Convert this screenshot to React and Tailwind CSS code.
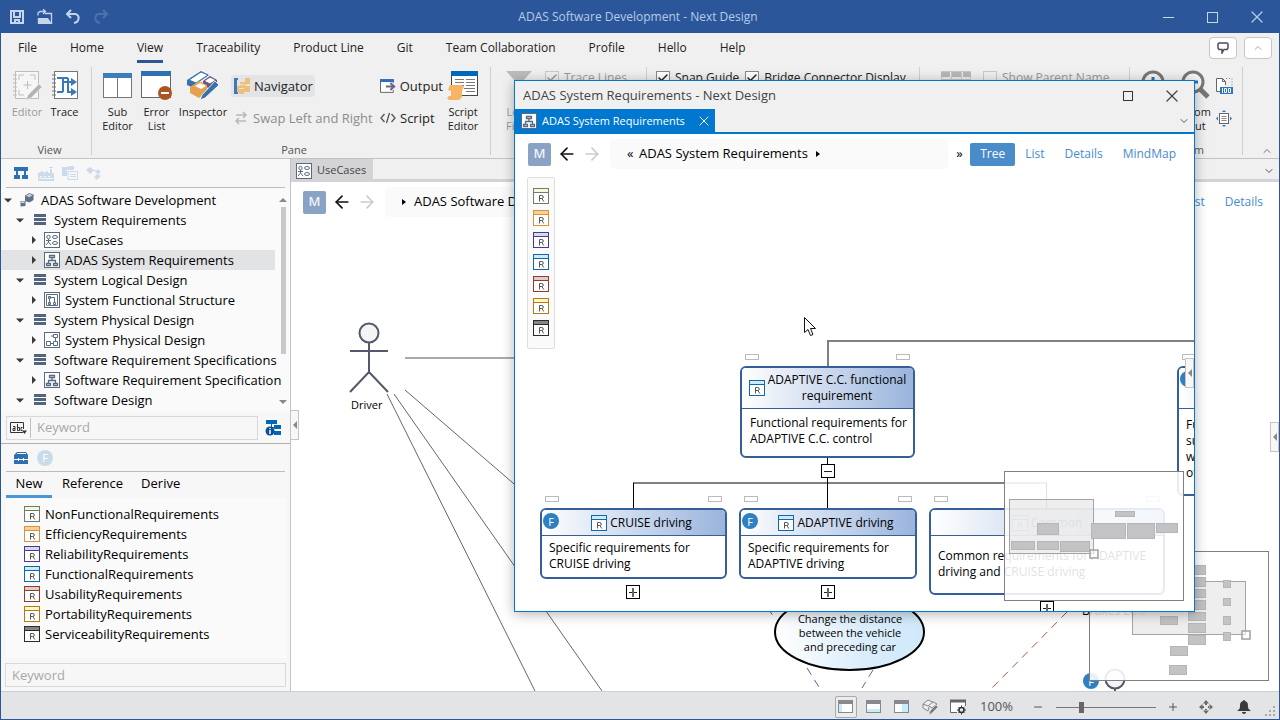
import React from "react";
import { ArrowLeft, ArrowRight, Check, ChevronDown, ChevronUp, Minus, Plus, X } from "lucide-react";

const MENU = ["File", "Home", "View", "Traceability", "Product Line", "Git", "Team Collaboration", "Profile", "Hello", "Help"];

const REQS = [
  { name: "NonFunctionalRequirements", stroke: "#6b7f68", fill: "#f4fadb" },
  { name: "EfficiencyRequirements", stroke: "#d8923a", fill: "#f8cf9a" },
  { name: "ReliabilityRequirements", stroke: "#4a3a8e", fill: "#d5d8f4" },
  { name: "FunctionalRequirements", stroke: "#0e69a6", fill: "#cdeafb" },
  { name: "UsabilityRequirements", stroke: "#963a2c", fill: "#d8d0d0" },
  { name: "PortabilityRequirements", stroke: "#b87a10", fill: "#fff5c4" },
  { name: "ServiceabilityRequirements", stroke: "#2e2a2c", fill: "#8b8484" },
];

const TREE = [
  { label: "ADAS Software Development", depth: 0, icon: "project" },
  { label: "System Requirements", depth: 1, icon: "folder" },
  { label: "UseCases", depth: 2, icon: "usecase" },
  { label: "ADAS System Requirements", depth: 2, icon: "tree", selected: true },
  { label: "System Logical Design", depth: 1, icon: "folder" },
  { label: "System Functional Structure", depth: 2, icon: "structure" },
  { label: "System Physical Design", depth: 1, icon: "folder" },
  { label: "System Physical Design", depth: 2, icon: "physical" },
  { label: "Software Requirement Specifications", depth: 1, icon: "folder" },
  { label: "Software Requirement Specification", depth: 2, icon: "tree" },
  { label: "Software Design", depth: 1, icon: "folder" },
];

/* ---------- icons ---------- */

function ReqIcon({ stroke = "#0e69a6", fill = "#cdeafb" }) {
  return (
    <svg width="16" height="16" viewBox="0 0 16 16" className="shrink-0" fill="none">
      <rect x="0.5" y="0.5" width="15" height="15" fill="#fff" stroke={stroke} />
      <path d="M1 1h14v3H1z" fill={fill} />
      <path d="M1 4.5h14" stroke={stroke} />
      <path d="M6.500 13.500V7.500h2.300a1.500 1.500 0 0 1 0 3H6.500M9 10.500l1.700 3" stroke="#555" />
    </svg>
  );
}

function ModelIcon({ type }) {
  if (type === "project") {
    return (
      <svg width="14" height="14" viewBox="0 0 14 14" className="shrink-0">
        <path d="M5 3l4-2.500L13.500 2v5L9.500 9.500 5 8z" fill="#5f7088" />
        <path d="M5 3l4.500 1.500L13.500 2 9 .5z" fill="#c8d0dc" stroke="#5f7088" strokeWidth=".7" />
        <path d="M.5 8h5v5l-5 .5z" fill="#5f7088" />
        <path d="M1 8.500h3.500v1.500H1z" fill="#d4dae4" />
      </svg>
    );
  }
  if (type === "folder") {
    return (
      <svg width="13" height="12" viewBox="0 0 13 12" className="shrink-0" fill="#52657c">
        <path d="M1 0h12v3H1zM1 4h12v3H1zM1 8h12v3H1z" />
      </svg>
    );
  }
  return (
    <svg width="16" height="16" viewBox="0 0 16 16" className="shrink-0" fill="none" stroke="#5a6b80">
      <rect x="0.500" y="0.500" width="15" height="15" fill="#fff" />
      {type === "tree" && (
        <path d="M5.500 3.500h5v2h-5zM8 5.500v3M4.500 11V8.500h7V11M2.500 11.500h4v2h-4zM9.500 11.500h4v2h-4z" strokeWidth="1.300" />
      )}
      {type === "usecase" && (
        <g>
          <circle cx="4.500" cy="5" r="1.700" />
          <path d="M4.500 7v3M2 8.500h5M2 13l2.500-3L7 13" />
          <ellipse cx="11" cy="5" rx="2.500" ry="1.500" />
          <ellipse cx="11" cy="11" rx="2.500" ry="1.500" />
        </g>
      )}
      {type === "structure" && (
        <path d="M2.500 2.500h11v11h-11zM5.500 5.500v6M4.500 4.500h2v2h-2zM4.500 10.500h2v2h-2zM6.500 5.500h4v5M9.500 10.500h2v2h-2z" />
      )}
      {type === "physical" && (
        <path d="M9.500 2.500h4v3h-4zM7 4h2.500M11.500 5.500V10M2.500 9.500h4v4h-4zM9.500 9.500h4v4h-4zM6.500 11.500h3" />
      )}
    </svg>
  );
}

function Caret({ open }) {
  return (
    <svg width="10" height="10" viewBox="0 0 10 10" className="shrink-0" fill="#3a3a3a">
      {open ? <path d="M1 3.500h8L5 7.500z" /> : <path d="M3 1l4 4-4 4z" />}
    </svg>
  );
}

function CrumbMark() {
  return (
    <svg width="4" height="6" viewBox="0 0 4 6" className="shrink-0">
      <path d="M0 0l4 3-4 3z" />
    </svg>
  );
}

function EditorIcon() {
  return (
    <svg width="30" height="30" viewBox="0 0 30 30" fill="none" stroke="#bdbdbd">
      <rect x="3.500" y="1.500" width="23" height="27" fill="#f6f6f6" />
      <path d="M1 5h4M1 9h4M1 13h4M1 17h4M1 21h4M1 25h4" />
      <path d="M7 10V5h5M18 5h5v5M7 20v5h5M15.500 11v8M11.500 15h8" />
      <path d="M27 14l3 3-11 11-5 2 2-5z" fill="#b4b4b4" stroke="#f0f0f0" strokeWidth=".6" />
    </svg>
  );
}

function TraceIcon() {
  return (
    <svg width="28" height="30" viewBox="0 0 28 30" fill="none">
      <rect x="3.500" y="1.500" width="23" height="27" fill="#fff" stroke="#777" />
      <path d="M1 5h4M1 9h4M1 13h4M1 17h4M1 21h4M1 25h4" stroke="#777" />
      <path d="M6 8h6v14M6 22h6M12 12h9M17 8v14h4M12 8h5" stroke="#3b7ab8" strokeWidth="2" />
      <path d="M20 8l6 4-6 4zM20 18l6 4-6 4z" fill="#3b7ab8" />
    </svg>
  );
}

function SubEditorIcon() {
  return (
    <svg width="30" height="30" viewBox="0 0 30 30" fill="none">
      <rect x="0.500" y="3.500" width="28" height="24" fill="#fff" stroke="#777" />
      <path d="M0 3h29v5H0z" fill="#3f7cba" />
      <path d="M14.500 8v20" stroke="#777" />
    </svg>
  );
}

function ErrorListIcon() {
  return (
    <svg width="32" height="30" viewBox="0 0 32 30" fill="none">
      <rect x="0.500" y="1.500" width="29" height="26" fill="#fff" stroke="#666" />
      <path d="M0 1h30v5H0z" fill="#2f70b2" />
      <circle cx="24" cy="23" r="7" fill="#ad5522" />
      <path d="M20 23h8" stroke="#fff" strokeWidth="2" />
    </svg>
  );
}

function InspectorIcon() {
  return (
    <svg width="34" height="32" viewBox="0 0 34 32" fill="none">
      <path d="M1 10l14-9 8 4-13 9v5L1 15z" fill="#3573b0" />
      <path d="M3 10l12-8 7 3-12 8z" fill="#fff" stroke="#3573b0" />
      <path d="M17 11l7-5 7 4v4l-7 5-7-4z" fill="#6a5482" />
      <path d="M18 11l6-4 6 3-6 4z" fill="#fff" stroke="#6a5482" />
      <path d="M4 17l9-6 8 4v7l-8 6-9-5z" fill="#e4a24e" />
      <path d="M9 16l5-3 6 3-5 3z" fill="#fff" />
      <path d="M29 11l4 4-14 13-5 2 2-5z" fill="#3573b0" stroke="#fff" strokeWidth=".8" />
    </svg>
  );
}

function NavigatorIcon() {
  return (
    <svg width="16" height="16" viewBox="0 0 16 16">
      <path d="M0 0h4v2H3v12h1v2H0z" fill="#3b7ab8" />
      <path d="M11 0h5v6h-5zM6 4h6v6H6zM10 8h6v6h-6zM3 8h3v6H3zM5 11h5v5H5z" fill="#ecc07c" />
      <path d="M11 2.500h-1M6 6.500h4M11 7.500h5M5 10.500h5" stroke="#f6e3c4" />
    </svg>
  );
}

function SwapIcon() {
  return (
    <svg width="14" height="14" viewBox="0 0 14 14" fill="none" stroke="#b8b8b8" strokeWidth="1.500">
      <path d="M2 4h10M9 1l3 3-3 3M12 10H2M5 7l-3 3 3 3" />
    </svg>
  );
}

function OutputIcon() {
  return (
    <svg width="16" height="14" viewBox="0 0 16 14" fill="none">
      <path d="M13.500 4V.5H.5v13h13V11" fill="#fff" stroke="#666" />
      <path d="M0 0h14v3H0z" fill="#2f6fb4" />
      <path d="M6 7.500h7M10.500 4l4 3.500-4 3.500" stroke="#6a6488" strokeWidth="2" />
    </svg>
  );
}

function CodeIcon() {
  return (
    <svg width="16" height="12" viewBox="0 0 16 12" fill="none" stroke="#555" strokeWidth="1.300">
      <path d="M4.500 2L1 6l3.500 4M11.500 2L15 6l-3.500 4M9.500 1l-3 10" />
    </svg>
  );
}

function ScriptEditorIcon() {
  return (
    <svg width="32" height="30" viewBox="0 0 32 30" fill="none">
      <rect x="4.500" y="1.500" width="26" height="24" fill="#fff" stroke="#444" />
      <path d="M4 1h27v5H4z" fill="#0068b8" />
      <path d="M8 9.500h9M19 9.500h9M8 12.500h9M19 12.500h9M12 15.500h5M19 15.500h9M17 18.500h11M19 21.500h9" stroke="#777" />
      <path d="M3 15h12l2 2-2 3v7l-3 3H2l-2-2 2-2h2v-5l-3-1z" fill="#f5b562" />
    </svg>
  );
}

function ZoomGlass({ sign }) {
  return (
    <svg width="30" height="30" viewBox="0 0 30 30" fill="none">
      <circle cx="12" cy="12" r="10" stroke="#777" strokeWidth="3" fill="#f4f4f4" />
      <path d="M19 19l8 8" stroke="#777" strokeWidth="5" />
      <path d={sign === "+" ? "M7 12h10M12 7v10" : "M7 12h10"} stroke="#2f70b2" strokeWidth="3" />
    </svg>
  );
}

function Badge() {
  return (
    <span className="flex size-4 items-center justify-center rounded-full bg-[#2f80c2] text-[11px] leading-none text-white">
      F
    </span>
  );
}

/* ---------- ribbon ---------- */

function BigButton({ icon, lines, disabled, width }) {
  return (
    <button
      disabled={disabled}
      className={`flex shrink-0 flex-col items-center text-[11px] leading-[14px] ${width} ${disabled ? "text-[#9a9a9a]" : "text-[#222]"}`}
    >
      <span className="flex h-[35px] items-start">{icon}</span>
      {lines.map((l) => (
        <span key={l} className="whitespace-nowrap">{l}</span>
      ))}
    </button>
  );
}

function Group({ label, className, children }) {
  return (
    <section className={`flex h-[88px] shrink-0 flex-col border-r border-[#d0d0d0] ${className}`}>
      <div className="flex flex-1 items-start pt-[3px]">{children}</div>
      <div className="h-3 text-center text-[11px] leading-[14px] text-[#555]">{label}</div>
    </section>
  );
}

function RibbonCheck({ label, checked, disabled }) {
  return (
    <label className={`flex items-center gap-[5px] whitespace-nowrap text-xs leading-4 ${disabled ? "text-[#9a9a9a]" : "text-[#222]"}`}>
      <span className="relative flex size-[14px]">
        <input
          type="checkbox"
          defaultChecked={checked}
          disabled={disabled}
          className={`size-[14px] appearance-none border ${disabled ? "border-[#c8ccc8] bg-[#f0f0f0]" : "border-[#888] bg-white"}`}
        />
        {checked && <Check className="pointer-events-none absolute left-px top-px size-3" strokeWidth={3} />}
      </span>
      {label}
    </label>
  );
}

function Ribbon() {
  return (
    <div className="flex h-[93px] shrink-0 items-start overflow-hidden border-b border-[#c3c3c3] pt-px">
      <Group label="View" className="w-[91px] pl-[7px]">
        <BigButton icon={<EditorIcon />} lines={["Editor"]} disabled width="w-[38px]" />
        <BigButton icon={<TraceIcon />} lines={["Trace"]} width="w-[37px]" />
      </Group>
      <Group label="Pane" className="w-[399px] pl-[6px]">
        <BigButton icon={<SubEditorIcon />} lines={["Sub", "Editor"]} width="w-[39px]" />
        <BigButton icon={<ErrorListIcon />} lines={["Error", "List"]} width="w-[39px]" />
        <BigButton icon={<InspectorIcon />} lines={["Inspector"]} width="w-[54px]" />
        <div className="grid grid-cols-[150px_63px] gap-y-[10px] pt-[5px] text-[13px] leading-[22px] text-[#222]">
          <div>
            <button className="ml-px flex h-[22px] w-[84px] items-center gap-1 rounded-sm bg-[#e2e4e6] pl-[3px]">
              <NavigatorIcon />Navigator
            </button>
          </div>
          <button className="flex items-center gap-1"><OutputIcon />Output</button>
          <button disabled className="flex items-center gap-[5px] whitespace-nowrap pl-1 text-[#8d8d8d]">
            <SwapIcon />Swap Left and Right
          </button>
          <button className="flex items-center gap-1"><CodeIcon />Script</button>
        </div>
        <BigButton icon={<ScriptEditorIcon />} lines={["Script", "Editor"]} width="w-[40px]" />
      </Group>
      <Group label="" className="w-[156px] pl-2">
        <BigButton
          icon={<svg width="26" height="28" viewBox="0 0 26 28"><path d="M0 1h26L16 12v12l-6-4v-8z" fill="#bcbcbc" /></svg>}
          lines={["Load", "Filter"]}
          disabled
          width="w-[40px]"
        />
        <div className="pl-[6px]">
          <RibbonCheck label="Trace Lines" checked disabled />
        </div>
      </Group>
      <Group label="" className="w-[273px] pl-[9px]">
        <div className="flex gap-[6px]">
          <RibbonCheck label="Snap Guide" checked />
          <RibbonCheck label="Bridge Connector Display" checked />
        </div>
      </Group>
      <Group label="" className="w-[210px] pl-[21px]">
        <svg width="30" height="28" viewBox="0 0 30 28" className="mr-3 shrink-0" fill="none" stroke="#c8c8c8">
          <path d="M.5 1.500h29v24H.5zM.5 9.500h29M10.500 1v24M20.500 1v24" fill="#f0f0f0" />
          <path d="M0 2h9v5H0zM11 2h9v5h-9zM22 2h8v5h-8z" fill="#b8b8b8" stroke="none" />
        </svg>
        <RibbonCheck label="Show Parent Name" disabled />
      </Group>
      <Group label="Zoom" className="w-[113px] pl-[6px]">
        <BigButton icon={<ZoomGlass sign="+" />} lines={["Zoom", "In"]} width="w-[40px]" />
        <BigButton icon={<ZoomGlass sign="-" />} lines={["Zoom", "Out"]} width="w-[40px]" />
        <div className="flex flex-col gap-4 pt-[7px]">
          <button aria-label="Actual size">
            <svg width="17" height="17" viewBox="0 0 17 17" fill="none">
              <path d="M.5 14.500V1.500h6l3 3V8M.5 14.500H4M6.500 1.500v3h3" stroke="#666" fill="#fff" />
              <path d="M10 1.500h6V9" stroke="#888" strokeDasharray="1 2" />
              <path d="M4 10h13v7H4z" fill="#2f75b8" />
              <path d="M6.500 11v5M8.500 11.500h2v4h-2zM12.500 11.500h2v4h-2z" stroke="#fff" />
            </svg>
          </button>
          <button aria-label="Fit to window">
            <svg width="17" height="17" viewBox="0 0 17 17" fill="none">
              <rect x="3.500" y="3.500" width="9" height="10" fill="#fff" stroke="#666" />
              <path d="M5.500 6.500h5M5.500 8.500h5M5.500 10.500h5" stroke="#888" />
              <path d="M6 2L8 0l2 2zM6 15l2 2 2-2zM2 6.500L0 8.500l2 2zM14 6.500l2 2-2 2z" fill="#2f75b8" />
            </svg>
          </button>
        </div>
      </Group>
      <button aria-label="Collapse ribbon" className="ml-auto mr-[6px] self-end pb-px">
        <ChevronUp className="size-3 text-[#777]" />
      </button>
    </div>
  );
}

/* ---------- side bar ---------- */

function TreeRow({ item }) {
  const pad = ["pl-[2px]", "pl-[14px]", "pl-[28px]"][item.depth];
  const gap = ["gap-[7px]", "gap-[8px]", "gap-[5px]"][item.depth];
  return (
    <li className={`mr-[15px] flex h-5 items-center whitespace-nowrap text-[13px] leading-5 ${gap} ${pad} ${item.selected ? "bg-[#e2e3e5]" : ""}`}>
      <Caret open={item.depth < 2} />
      <ModelIcon type={item.icon} />
      <span>{item.label}</span>
    </li>
  );
}

function Sidebar() {
  return (
    <aside className="flex w-[290px] shrink-0 flex-col border-r border-[#c3c3c3] bg-[#f7f7f7]">
      <div className="mx-[5px] flex h-[29px] shrink-0 items-center gap-2 border-b border-[#bbb] pl-2">
        <svg width="16" height="14" viewBox="0 0 16 14" fill="none">
          <path d="M0 1h14v4H0zM0 9h6v4H0zM8 9h6v4H8z" fill="#2f70b2" />
          <path d="M3 4v5M11 4v5" stroke="#2f70b2" strokeWidth="2" />
        </svg>
        <svg width="16" height="16" viewBox="0 0 16 16" fill="#ccdaea">
          <path d="M0 8l5-2v2l5-2v2h2V4h2v4h2v8H0zM11 2h4v1h-4z" />
          <path d="M2 11h2v1H2zM6 11h2v1H6zM10 11h2v1h-2zM1 13h14v1H1z" fill="#f7f7f7" />
        </svg>
        <svg width="16" height="14" viewBox="0 0 16 14" fill="none" stroke="#ccdaea">
          <path d="M0 1h6l1-1h5v4H5v6H0z" fill="#ccdaea" stroke="none" />
          <path d="M6 5.500h9.500v8H6zM8 8.500h6M8 10.500h6" />
        </svg>
        <svg width="16" height="14" viewBox="0 0 16 14" fill="#ccdaea">
          <path d="M4 1l4 3-4 4-4-4zM12 3l3 3-3 2-3-2zM11 8l4 2-4 4-3-3zM4 4h6v1H4z" />
        </svg>
      </div>

      <div className="relative min-h-0 flex-1 overflow-hidden bg-[#fafafa] pt-[2px]">
        <ul>
          {TREE.map((t, i) => <TreeRow key={i} item={t} />)}
        </ul>
        <div className="absolute bottom-[7px] right-[3px] top-[9px] flex w-2 flex-col items-center justify-between">
          <svg width="8" height="5" viewBox="0 0 8 5"><path d="M0 5l4-4 4 4z" fill="#888" /></svg>
          <span className="mb-auto mt-[5px] h-[147px] w-[5px] bg-[#c8c8c8]" />
          <svg width="8" height="5" viewBox="0 0 8 5"><path d="M0 0l4 4 4-4z" fill="#888" /></svg>
        </div>
      </div>

      <div className="flex h-8 shrink-0 items-center border-b border-[#b0b0b0] pl-[5px]">
        <div className="flex h-6 w-[252px] items-center border border-[#d8d8d8]">
          <button aria-label="Match mode" className="flex h-5 w-6 items-center justify-center border-r border-[#c0c0c0]">
            <svg width="17" height="12" viewBox="0 0 17 12" fill="none" stroke="#333">
              <path d="M13 10.500H.5V.5h13V7" />
              <path d="M3 4.500h2v4H3v-2h2M7.500 2v6.500h2v-3h-2M12.500 5.500h-1.500v3h1.500" />
              <path d="M12 8.500h5L14.500 12z" fill="#333" stroke="none" />
            </svg>
          </button>
          <input aria-label="Search model" placeholder="Keyword" className="min-w-0 flex-1 bg-transparent pl-[6px] text-[13px] outline-none placeholder:text-[#a8a8a8]" />
        </div>
        <svg width="17" height="17" viewBox="0 0 17 17" className="ml-[7px]">
          <path d="M1 1h11v4H1zM9 6h7v4H9zM9 12h7v4H9z" fill="#0068b8" />
          <path d="M6.500 5v9M6 8.500h3M6 14h3" stroke="#0068b8" />
          <circle cx="5" cy="12" r="4.500" fill="#0b4f96" />
          <path d="M5 11v4M5 9v1" stroke="#fff" strokeWidth="1.500" />
        </svg>
      </div>

      <div className="mx-[5px] flex h-7 shrink-0 items-center gap-2 border-b border-[#bbb] pl-2">
        <svg width="15" height="14" viewBox="0 0 15 14">
          <path d="M3 1h9l2 3v9H0V4z" fill="#2f70b2" />
          <path d="M3 2.500h9M0 8.500h14M4.500 7v3M9.500 7v3" stroke="#fff" fill="none" />
        </svg>
        <span className="flex size-4 items-center justify-center rounded-full bg-[#c8dce8] text-[11px] leading-none text-white">F</span>
      </div>

      <nav className="flex h-[26px] shrink-0 pl-[5px] text-[13px]">
        <button className="w-[46px] border-b-[3px] border-[#4a97d8]">New</button>
        <button className="ml-[10px] pb-[3px]">Reference</button>
        <button className="ml-[18px] pb-[3px]">Derive</button>
      </nav>
      <ul className="mx-1 h-[160px] shrink-0 bg-[#fafafa] pt-[6px]">
        {REQS.map((r) => (
          <li key={r.name} className="flex h-5 items-center gap-[5px] pl-[19px] text-[13px] leading-5">
            <ReqIcon stroke={r.stroke} fill={r.fill} />
            {r.name}
          </li>
        ))}
      </ul>
      <input
        aria-label="Search requirements"
        placeholder="Keyword"
        className="mx-1 mb-1 mt-[5px] h-6 shrink-0 border border-[#d8d8d8] bg-[#f7f7f7] px-[6px] text-[13px] outline-none placeholder:text-[#a8a8a8]"
      />
    </aside>
  );
}

/* ---------- diagram pieces ---------- */

function ViewToolbar({ className, children, views }) {
  return (
    <div className={`flex items-center text-[13px] ${className}`}>
      <button className="flex size-[23px] shrink-0 items-center justify-center rounded-xs bg-[#8aa2c4] font-semibold text-[#eef3fa]">M</button>
      <ArrowLeft className="ml-[6px] size-5 shrink-0 text-[#111]" />
      <ArrowRight className="ml-[5px] size-5 shrink-0 text-[#ccc]" />
      <div className="ml-2 flex h-[30px] min-w-0 flex-1 items-center gap-2 whitespace-nowrap rounded-sm bg-[#fafafa] pl-[17px]">
        {children}
      </div>
      <span className="w-[22px] shrink-0 pl-2">»</span>
      <div className="flex shrink-0 text-xs">
        {views.map((v) => (
          <button
            key={v}
            className={`h-[23px] px-[10px] ${v === "Tree" ? "rounded-xs bg-[#4a8bc9] text-white" : "text-[#4a8bc9]"}`}
          >
            {v}
          </button>
        ))}
      </div>
    </div>
  );
}

function Handle({ className }) {
  return (
    <button aria-label="Toggle pane" className={`absolute flex h-[30px] w-[9px] items-center justify-center border border-[#c4c4c4] bg-[#f7f7f7] ${className}`}>
      <svg width="4" height="8" viewBox="0 0 4 8"><path d="M4 0v8L0 4z" fill="#888" /></svg>
    </button>
  );
}

function Node({ pos, title, icon = true, badge, tall, text, pad }) {
  return (
    <div className={`absolute ${pos}`}>
      <span className="absolute -top-3 left-[5px] h-[6px] w-[14px] border border-[#bbb]" />
      <span className="absolute -top-3 right-[5px] h-[6px] w-[14px] border border-[#bbb]" />
      <div className="h-full overflow-hidden rounded-md border-2 border-[#365f9a] bg-white text-xs leading-4">
        <div className={`relative flex items-center justify-center gap-[3px] border-b border-[#365f9a] bg-linear-to-r from-white to-[#9ab4dc] text-center ${tall ? "h-[41px]" : "h-[26px]"} ${badge ? "pl-4" : ""}`}>
          {badge && <span className="absolute left-px top-[3px]"><Badge /></span>}
          {icon && <ReqIcon />}
          <span className="whitespace-pre">{title}</span>
        </div>
        <p className={`whitespace-pre ${pad}`}>{text}</p>
      </div>
    </div>
  );
}

function Toggle({ pos, open }) {
  return (
    <button aria-label="Toggle children" className={`absolute flex size-[14px] items-center justify-center border border-black bg-white ${pos}`}>
      <svg width="10" height="10" viewBox="0 0 10 10" stroke="#222">
        <path d="M1 5.500h8" />
        {!open && <path d="M5 1v9" strokeWidth="2" stroke="#666" />}
      </svg>
    </button>
  );
}

function MiniMap({ className, view, blocks }) {
  const [x, y, w, h] = view;
  return (
    <svg width="180" height="130" className={`absolute ${className}`}>
      <rect x="0.500" y="0.500" width="179" height="129" fill="#fff" fillOpacity=".88" stroke="#808080" />
      <rect x={x} y={y} width={w} height={h} fill="#ddd" fillOpacity=".5" stroke="#a4a4a4" />
      {blocks.map(([bx, by, bw, bh], i) => (
        <rect key={i} x={bx + 0.5} y={by + 0.5} width={bw} height={bh} fill="#c3c3c5" stroke="#b6b6b6" />
      ))}
      <rect x={x + w - 3.5} y={y + h - 3.5} width="8" height="8" fill="#fff" fillOpacity=".6" stroke="#a0a0a0" strokeWidth="1.500" />
    </svg>
  );
}

function UseCaseCanvas() {
  return (
    <main className="relative flex min-w-0 flex-1 flex-col bg-white">
      <div className="flex h-[23px] shrink-0 items-stretch justify-between border-b-[3px] border-[#d4d4d6] bg-[#f0f0f0]">
        <button className="flex w-[82px] items-center gap-[5px] bg-[#d4d4d6] pl-[5px] pt-[3px] text-[11px] text-[#444]">
          <ModelIcon type="usecase" />UseCases
        </button>
        <ChevronDown className="mr-1 mt-[6px] size-3 text-[#555]" />
      </div>
      <div className="relative flex-1 overflow-hidden">
        <svg className="absolute inset-0 size-full" fill="none">
          <defs>
            <linearGradient id="uc">
              <stop offset="0" stopColor="#fff" />
              <stop offset="0.600" stopColor="#daedfb" />
              <stop offset="1" stopColor="#d0e9fa" />
            </linearGradient>
          </defs>
          <g transform="translate(-291 -182)">
            <path d="M405 358h130" stroke="#aaa" strokeWidth="2" />
            <path d="M405 390l195 168M394 394l208 297M387 394l148 297" stroke="#666" />
            <g stroke="#52596a" strokeWidth="2">
              <circle cx="369" cy="333" r="9.500" fill="#f4f4f4" />
              <path d="M350 351h38M369 343v29M350 392l19-20 19 20" />
            </g>
            <path d="M768 608l5 8M807 668l12 19" stroke="#4a6aa0" strokeDasharray="8 6" />
            <path d="M873 670l-11 18" stroke="#98604c" strokeDasharray="8 6" />
            <path d="M1067 612l-76 77" stroke="#98604c" strokeDasharray="8 6" />
            <ellipse cx="849.500" cy="632" rx="74.500" ry="38" fill="url(#uc)" stroke="#000" strokeWidth="2" />
            <circle cx="1115" cy="679" r="9.500" fill="#f4f4f4" stroke="#52596a" strokeWidth="2" />
            <path d="M1115 689v6" stroke="#52596a" strokeWidth="2" />
          </g>
        </svg>
        <span className="absolute left-[60px] top-[215px] text-[11px] leading-4">Driver</span>
        <p className="absolute left-[484px] top-[430px] w-[150px] text-center text-[11px] leading-[14px]">
          Change the distance<br />between the vehicle<br />and preceding car
        </p>
        <span className="absolute left-[791px] top-[421px] whitespace-nowrap text-xs leading-4">Brakes ECU</span>
        <span className="absolute left-[792px] top-[491px]"><Badge /></span>
        <ViewToolbar className="relative pl-3 pr-[6px] pt-[5px]" views={["List", "Details"]}>
          <CrumbMark />
          ADAS Software Development
        </ViewToolbar>
        <MiniMap
          className="bottom-[10px] right-[10px]"
          view={[43.5, 30.5, 113, 53]}
          blocks={[
            [98, 14, 18, 9], [98, 26, 18, 9], [98, 38, 18, 8], [98, 49, 18, 9], [99, 61, 17, 8], [99, 72, 17, 9], [99, 84, 17, 9],
            [134, 29, 7, 7], [134, 47, 7, 7], [134, 65, 7, 8], [134, 81, 7, 8], [71, 65, 17, 8], [81, 95, 17, 9], [80, 114, 17, 9],
          ]}
        />
      </div>
      <Handle className="-left-px top-[251px]" />
      <Handle className="right-0 top-[263px]" />
    </main>
  );
}

function FloatingWindow() {
  return (
    <div className="absolute left-[513px] top-20 flex h-[532px] w-[681px] flex-col border border-[#0078d0] bg-white shadow-[0_2px_12px_rgba(0,0,0,0.3)]">
      <header className="flex h-7 shrink-0 items-center bg-[#f0f0f0] pl-2 pt-px text-[13px] text-[#444]">
        <h2 className="flex-1">ADAS System Requirements - Next Design</h2>
        <button aria-label="Maximize" className="mr-[29px] size-[10px] border border-[#333]" />
        <button aria-label="Close" className="mr-3"><X className="size-5" strokeWidth={1.5} /></button>
      </header>
      <div className="flex h-[25px] shrink-0 items-stretch border-b-2 border-[#0078d0] bg-[#f0f0f0]">
        <button className="flex items-center gap-[5px] bg-[#0078d0] pl-[6px] pr-[3px] pt-px text-[11px] text-white">
          <ModelIcon type="tree" />
          ADAS System Requirements
          <X className="ml-[6px] size-4" strokeWidth={1.5} />
        </button>
        <ChevronDown className="ml-auto mr-1 mt-[6px] size-3 text-[#555]" />
      </div>
      <div className="relative flex-1 overflow-hidden">
        <svg className="absolute inset-0 size-full" fill="none">
          <g transform="translate(-515 -134)">
            <path d="M828 366v-25h367M633 483h414" stroke="#808080" strokeWidth="2" />
            <path d="M827.500 458v50M633.500 483v25M1046.500 483v25" stroke="#000" />
          </g>
        </svg>
        <ViewToolbar className="relative pl-[13px] pr-2 pt-[5px]" views={["Tree", "List", "Details", "MindMap"]}>
          <span className="w-1">«</span>
          ADAS System Requirements
          <CrumbMark />
        </ViewToolbar>
        <div className="absolute left-3 top-[43px] flex w-7 flex-col items-center gap-[6px] rounded-xs border border-[#ddd] bg-[#fafafa] pb-3 pt-[10px]">
          {REQS.map((r) => <ReqIcon key={r.name} stroke={r.stroke} fill={r.fill} />)}
        </div>

        <Node pos="left-[225px] top-[232px] h-[92px] w-[175px]" tall title={"ADAPTIVE C.C. functional\nrequirement"} text={"Functional requirements for\nADAPTIVE C.C. control"} pad="px-2 pt-[6px]" />
        <Node pos="left-[25px] top-[374px] h-[71px] w-[187px]" badge title="CRUISE driving" text={"Specific requirements for\nCRUISE driving"} pad="px-[7px] pt-1" />
        <Node pos="left-[224px] top-[374px] h-[71px] w-[178px]" badge title="ADAPTIVE driving" text={"Specific requirements for\nADAPTIVE driving"} pad="px-[7px] pt-1" />
        <Node pos="left-[414px] top-[374px] h-[87px] w-[236px]" title="Common" text={"Common requirements for ADAPTIVE\ndriving and CRUISE driving"} pad="px-[7px] pt-3" />
        <Node pos="left-[662px] top-[232px] h-[130px] w-[175px]" tall badge icon={false} title="" text={"Functional\nsupport\nwhile\nof"} pad="px-[7px] pt-2" />
        <Toggle pos="left-[306px] top-[330px]" open />
        <Toggle pos="left-[111px] top-[451px]" />
        <Toggle pos="left-[306px] top-[451px]" />
        <Toggle pos="left-[525px] top-[467px]" />

        <MiniMap
          className="bottom-[10px] right-[10px]"
          view={[5.5, 28.5, 84, 54]}
          blocks={[
            [111, 40, 19, 5], [33, 52, 21, 11], [7, 70, 23, 8], [33, 70, 21, 8], [56, 70, 29, 10],
            [87, 52, 34, 15], [123, 52, 27, 15], [152, 52, 21, 9],
          ]}
        />
        <Handle className="right-0 top-[224px]" />
        <svg width="13" height="20" viewBox="0 0 13 20" className="absolute left-[289px] top-[183px]">
          <path d="M.5.500v15l3.500-3 2.500 6 2.500-1-2.500-6h5z" fill="#fff" stroke="#111" />
        </svg>
      </div>
    </div>
  );
}

/* ---------- status bar ---------- */

function LayoutIcon({ pane }) {
  return (
    <svg width="16" height="14" viewBox="0 0 16 14" fill="none">
      <rect x="0.500" y="0.500" width="14" height="12" fill="#fff" stroke="#8a888e" />
      <path d={pane} fill="#c4eef8" />
      <path d="M0 0h15v4H0z" fill="#8a888e" />
    </svg>
  );
}

function StatusBar() {
  return (
    <footer className="flex h-7 shrink-0 items-center justify-end border-t border-[#cfcfd1] bg-[#e3e4e6] pr-1 pt-[3px] text-[13px] text-[#555]">
      <button aria-label="Left pane" className="flex h-[22px] w-[22px] items-center justify-center rounded-xs border border-[#aaa] bg-[#ececec]"><LayoutIcon pane="M1 4h3v8H1z" /></button>
      <button aria-label="Bottom pane" className="ml-[9px]"><LayoutIcon pane="M1 9h13v3H1z" /></button>
      <button aria-label="Right pane" className="ml-3"><LayoutIcon pane="M8 4h6v8H8z" /></button>
      <button aria-label="Inspector" className="ml-3">
        <svg width="17" height="16" viewBox="0 0 17 16" fill="none" stroke="#888">
          <path d="M1 5l5-4 5 2-5 4zM1 5v4l5 3 1-4M11 3l4 2-5 4-3-2" fill="#eee" />
          <path d="M14 6l2 2-6 6-3 2 1-4z" fill="#777" stroke="#e3e4e6" strokeWidth=".6" />
        </svg>
      </button>
      <button aria-label="Window settings" className="ml-[11px]">
        <svg width="17" height="16" viewBox="0 0 17 16" fill="none" stroke="#666">
          <path d="M7 13.500H.5V1.500h15V7" fill="#fff" />
          <path d="M0 2h16" strokeWidth="3" />
          <circle cx="11.500" cy="11" r="2.500" strokeWidth="1.500" stroke="#333" />
          <path d="M11.500 6.500v2M11.500 13.500v2M7 11h2M14 11h2M8.500 8l1.200 1.200M13.300 12.800l1.200 1.200M14.500 8l-1.200 1.200M9.700 12.800L8.500 14" stroke="#333" />
        </svg>
      </button>
      <span className="ml-[13px] w-[38px]">100%</span>
      <button aria-label="Zoom out" className="ml-[14px]"><Minus className="size-3" /></button>
      <div className="relative ml-3 flex h-4 w-[100px] items-center">
        <input
          type="range"
          aria-label="Zoom"
          defaultValue="24"
          className="h-px w-full appearance-none bg-[#777] [&::-webkit-slider-thumb]:h-[11px] [&::-webkit-slider-thumb]:w-[5px] [&::-webkit-slider-thumb]:appearance-none [&::-webkit-slider-thumb]:bg-[#6a6466]"
        />
      </div>
      <button aria-label="Zoom in" className="ml-[11px]"><Plus className="size-3" /></button>
      <svg width="14" height="14" viewBox="0 0 14 14" className="ml-5" fill="#6b6b66">
        <path d="M7 0l3 3.500H4zM7 14l3-3.500H4zM0 7l3.500-3v6zM14 7l-3.500-3v6zM6 3h2v2H6zM6 9h2v2H6zM3 6h2v2H3zM9 6h2v2H9z" />
      </svg>
      <svg width="14" height="14" viewBox="0 0 14 14" className="ml-6" fill="#3a3a3c">
        <path d="M7 0c1 0 1 1 1 1 3 1 3 3 3 6 0 2 2 3 3 4H0c1-1 3-2 3-4 0-3 0-5 3-6 0 0 0-1 1-1zM5 12h4c0 1-1 2-2 2s-2-1-2-2z" />
      </svg>
      <svg width="10" height="10" viewBox="0 0 10 10" className="ml-[14px] mt-2" fill="#aaa">
        <path d="M8 0h2v2H8zM8 4h2v2H8zM8 8h2v2H8zM4 4h2v2H4zM4 8h2v2H4zM0 8h2v2H0z" />
      </svg>
    </footer>
  );
}

export default function App() {
  return (
    <div className="relative flex h-screen min-h-[600px] flex-col overflow-hidden border-x border-b border-[#2b579a] bg-[#f0f0f0] font-['Open_Sans',sans-serif] text-black">
      <header className="flex h-[33px] shrink-0 items-center bg-[#2b579a] pl-2 pt-px text-[#b8cbe6]">
        <div className="flex flex-1 gap-3">
          <button aria-label="Save">
            <svg width="16" height="16" viewBox="0 0 16 16" fill="none" stroke="#c4d5ec" strokeWidth="2">
              <path d="M2 2h12v12H2zM4 8h8M5 2v5M11 2v5M6 14v-3h4v3" />
            </svg>
          </button>
          <button aria-label="Open">
            <svg width="16" height="16" viewBox="0 0 16 16" fill="#c4d5ec">
              <path d="M2 9h9l4 6H2z" />
              <path d="M8 4.500h6.500V15M1 6.500V4l2-1.500h5M6 0l2.500 2.500L6 5M1.500 9v6" fill="none" stroke="#c4d5ec" strokeWidth="1.300" />
            </svg>
          </button>
          <button aria-label="Undo">
            <svg width="16" height="16" viewBox="0 0 16 16" fill="none" stroke="#c4d5ec" strokeWidth="2">
              <path d="M6 1L2 5l4 4M2 5h8c5 0 5 8-1 9" />
            </svg>
          </button>
          <button aria-label="Redo">
            <svg width="16" height="16" viewBox="0 0 16 16" fill="none" stroke="#4d73ad" strokeWidth="2">
              <path d="M10 1l4 4-4 4M14 5H6C1 5 1 13 7 14" />
            </svg>
          </button>
        </div>
        <h1 className="text-xs">ADAS Software Development - Next Design</h1>
        <div className="flex flex-1 items-center justify-end pr-3">
          <button aria-label="Minimize" className="mr-[33px] h-px w-[11px] bg-[#c4d5ec]" />
          <button aria-label="Restore" className="mr-[29px] size-[11px] border border-[#c4d5ec]" />
          <button aria-label="Close app"><X className="size-5" strokeWidth={1.5} /></button>
        </div>
      </header>

      <nav className="flex h-[33px] shrink-0 items-center pl-[17px] text-xs text-[#222]">
        <div className="flex h-full flex-1 items-start gap-[33px]">
          {MENU.map((m) => (
            <button key={m} className={`h-[30px] whitespace-nowrap border-b-[3px] pt-[2px] leading-5 ${m === "View" ? "border-[#2b579a]" : "border-transparent"}`}>
              {m}
            </button>
          ))}
        </div>
        <button aria-label="Feedback" className="mb-1 mr-[7px] flex h-[22px] w-7 items-center justify-center rounded-sm border border-[#c6c6c6] bg-white">
          <svg width="12" height="12" viewBox="0 0 12 12" fill="none" stroke="#544a5c" strokeWidth="1.500">
            <path d="M2 1h8l1 1v4L10 7.500H7L5 11V7.500H2L1 6V2z" />
          </svg>
        </button>
        <button aria-label="Hide menu" className="mb-1 mr-[7px] flex h-[22px] w-7 items-center justify-center rounded-sm border border-[#c6c6c6] bg-white">
          <ChevronUp className="size-3 text-[#aaa]" />
        </button>
      </nav>

      <Ribbon />
      <div className="flex min-h-0 flex-1">
        <Sidebar />
        <UseCaseCanvas />
      </div>
      <StatusBar />
      <FloatingWindow />
    </div>
  );
}
